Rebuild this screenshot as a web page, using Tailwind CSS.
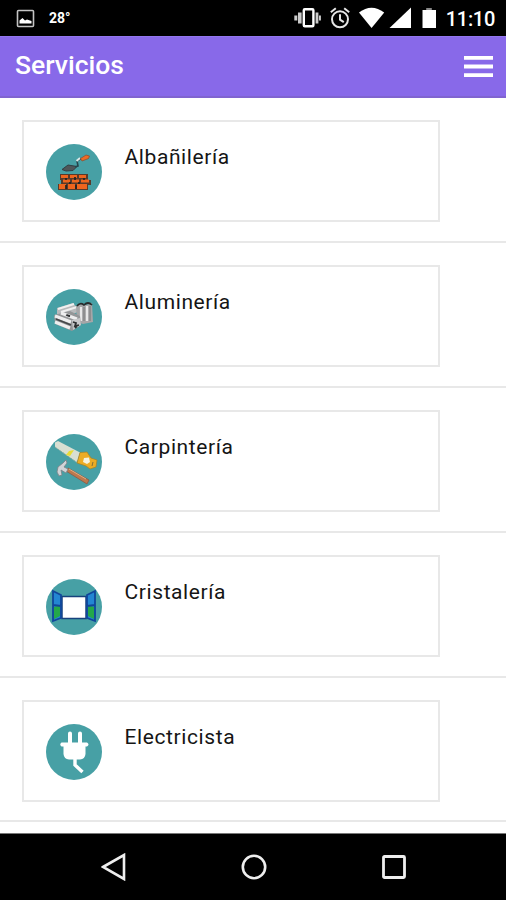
<!DOCTYPE html>
<html lang="es">
<head>
<meta charset="utf-8">
<title>Servicios</title>
<script src="https://cdn.jsdelivr.net/npm/@tailwindcss/browser@4"></script>
</head>
<body class="bg-white">
<div class="w-[506px] h-[900px] overflow-hidden flex flex-col bg-white font-[Roboto,'Liberation_Sans',sans-serif]">
  <div class="h-9 shrink-0 bg-black flex items-center justify-between pl-4 pr-[11px] text-white">
    <div class="flex items-center gap-[14px]">
      <svg width="19" height="19" viewBox="0 0 19 19"><rect x="1.5" y="1.5" width="16" height="16" rx="1" fill="none" stroke="#c4c4c4" stroke-width="1.6"/><path d="M3.5 14.5V11.5L6.5 9L9 11.5L11 10.5L15.5 12V14.5Z" fill="#fff"/></svg>
      <span class="text-sm font-bold leading-none">28°</span>
    </div>
    <svg width="142" height="22" viewBox="294 7 142 22" class="ml-auto mr-[10px]" fill="#fff">
      <rect x="303.8" y="9.3" width="9.6" height="17" rx="1" fill="none" stroke="#fff" stroke-width="2.4"/>
      <path d="M298 12.5h3.6v11H298zM294.3 15.5h3v5h-3zM315.6 12.5h2.8v11h-2.8zM319 15.5h1.9v5H319z" fill="#ccc"/>
      <g fill="none" stroke="#e6e6e6" stroke-width="2"><circle cx="340" cy="19.3" r="8"/><path d="M340 14.3v5.3l3.8 2.6M330.8 12.3l5-4M349.2 12.3l-5-4"/></g>
      <path d="M359 12.5Q371.5 3 384.2 12.5L371.6 28Z"/>
      <path d="M389.5 28L411 7.5V28Z"/>
      <path d="M422.5 10h13.5v18h-13.5z"/><path d="M426.2 8h5.6v2h-5.6z" fill="#888"/>
    </svg>
    <span class="text-[20px] font-medium leading-none tracking-[-0.3px] pt-px">11:10</span>
  </div>
  <header class="h-[62px] shrink-0 bg-[#8869e9] border-t border-t-[#9376ef] border-b-2 border-b-[#8064d0] flex items-center justify-between pl-[15px] pr-[13px]">
    <h1 class="text-[26.5px] leading-none font-medium text-white pb-[2px]">Servicios</h1>
    <svg width="29" height="22" viewBox="0 0 29 22" fill="#fff"><path d="M0 0h29v3.8H0zM0 8.6h29v3.8H0zM0 17.2h29V21H0z"/></svg>
  </header>
  <main class="h-[735px] shrink-0 overflow-hidden text-[21px] text-[#151515] tracking-[0.6px]">
    <section class="h-[144.9px] pt-[22px] pl-[22px] border-b-2 border-[#e8e8e8]">
      <div class="w-[418px] h-[102px] border-2 border-[#e8e8e8] flex pl-[21.5px] pt-[22px] gap-[23px]">
        <svg width="56" height="56" viewBox="0 0 56 56"><circle cx="28" cy="28" r="28" fill="#47a0a5"/>
          <path d="M16 25.5L22 21L31 22.5L27 26.5L20 27Z" fill="#4e5659" stroke="#333e42"/><path d="M29 23L32 22L31 17L35 14.5" fill="none" stroke="#26454c" stroke-width="1.6"/><path d="M30.5 17L34 14" stroke="#dce8e7" stroke-width="2"/><path d="M34.5 14.5L40 11L43.5 12L42.5 14.5L36 17Z" fill="#ed6b24" stroke="#8c4b2b" stroke-width=".7"/>
          <path d="M14 30h28v6h3v5h-3v5H12v-6h3v-4h-1z" fill="#583b2b"/><g fill="#ee651e"><path d="M15 31h7v3h-7zM24 31h7v3h-7zM33 31h7v3h-7zM17 35.5h7v3h-7zM26 35.5h7v3h-7zM35 35.5h8v3h-8zM13 40h7v5h-7zM22 40h7v5h-7zM31 40h10v5H31z"/></g><path d="M20 34v2M29 33v3M38 34v2M24 38v2M33 38v2M20 41v4M30 41v4" stroke="#222" stroke-width="1.7"/></svg>
        <span class="leading-7 -mt-px">Albañilería</span>
      </div>
    </section>
    <section class="h-[144.9px] pt-[22px] pl-[22px] border-b-2 border-[#e8e8e8]">
      <div class="w-[418px] h-[102px] border-2 border-[#e8e8e8] flex pl-[21.5px] pt-[22px] gap-[23px]">
        <svg width="56" height="56" viewBox="0 0 56 56"><circle cx="28" cy="28" r="28" fill="#47a0a5"/>
          <path d="M11 19L27 14L34 22L20 28L11 25Z" fill="#b8babc"/><path d="M12 20L28 15M15 23L31 18" stroke="#f0f0f0" stroke-width="2"/>
          <path d="M30 17L36 14L40 16L46 14L47 33L37 35L31 33Z" fill="#a6a6a8"/><path d="M31 17Q34 13 38 16Q42 12 46 16" fill="none" stroke="#272b2c" stroke-width="1.7"/><path d="M35 18v14M41 17v15" stroke="#e8e8e8" stroke-width="2.2"/><path d="M38 18v14M44 17v15" stroke="#777" stroke-width="1"/>
          <path d="M8 26L24 22L34 27L35 36L26 42L9 35Z" fill="#949698"/><path d="M9 27L25 33M9 33L24 39M15 24L31 30" stroke="#eeeeef" stroke-width="3"/><path d="M10 30L25 36M20 26l4 1.5" stroke="#454749" stroke-width="1.4"/><path d="M26 31l8-2 1 7-8 5z" fill="#c7c8ca"/><path d="M27 33l3 1-1 3 4-1M29 39l2-2M21 26l3 1" stroke="#2d2f30" stroke-width="1.8" fill="none"/></svg>
        <span class="leading-7 -mt-px">Aluminería</span>
      </div>
    </section>
    <section class="h-[144.9px] pt-[22px] pl-[22px] border-b-2 border-[#e8e8e8]">
      <div class="w-[418px] h-[102px] border-2 border-[#e8e8e8] flex pl-[21.5px] pt-[22px] gap-[23px]">
        <svg width="56" height="56" viewBox="0 0 56 56"><circle cx="28" cy="28" r="28" fill="#47a0a5"/>
          <path d="M9 8.5L12 7L34 18.5L31 28.5L9 13Z" fill="#d8dfd2"/><path d="M9 13L31 28.5" stroke="#87aa9d" stroke-dasharray="2 1.2"/><path d="M23 17L28 16L24 22L20 21Z" fill="#e8dc35"/>
          <path d="M34 18.5L41 18L45 24L51 26L50 33L44 35L40 32L31 29Z" fill="#edac24" stroke="#a38227" stroke-width=".7"/><path d="M38 24L43 23.5L44 28L41 30L37 28Z" fill="#f6f3df"/><path d="M47 28L46 32" stroke="#846d34"/>
          <path d="M22 34L43 46L41 50L20 37Z" fill="#bd784d" stroke="#8a5540" stroke-width=".7"/><path d="M23 35L40 45" stroke="#e0ae80"/><path d="M20 26L21 29L18 33L22 35L20 39L15 36L16 41L13 42L11 38L12 33L17 29Z" fill="#d0d4d7" stroke="#7d8287" stroke-width=".8"/></svg>
        <span class="leading-7 -mt-px">Carpintería</span>
      </div>
    </section>
    <section class="h-[144.9px] pt-[22px] pl-[22px] border-b-2 border-[#e8e8e8]">
      <div class="w-[418px] h-[102px] border-2 border-[#e8e8e8] flex pl-[21.5px] pt-[22px] gap-[23px]">
        <svg width="56" height="56" viewBox="0 0 56 56"><circle cx="28" cy="28" r="28" fill="#47a0a5"/>
          <path d="M16 17.5h24v22H16z" fill="#fff" stroke="#17427d" stroke-width="1.5"/>
          <path d="M7 12L15 16V39L7 42ZM49 12L41 16V39L49 42Z" fill="#2386d2"/><path d="M8 28L14 26V37L8 40ZM48 28L42 26V37L48 40Z" fill="#24a84a"/><path d="M7 12L15 16V39L7 42ZM49 12L41 16V39L49 42ZM7 26L15 27M49 26L41 27" fill="none" stroke="#10469b" stroke-width="1.8"/></svg>
        <span class="leading-7 -mt-px">Cristalería</span>
      </div>
    </section>
    <section class="h-[144.9px] pt-[22px] pl-[22px] border-b-2 border-[#e8e8e8]">
      <div class="w-[418px] h-[102px] border-2 border-[#e8e8e8] flex pl-[21.5px] pt-[22px] gap-[23px]">
        <svg width="56" height="56" viewBox="0 0 56 56"><circle cx="28" cy="28" r="28" fill="#47a0a5"/>
          <path d="M24 9.5V20M34 9.5V20" stroke="#fff" stroke-width="4" stroke-linecap="round"/><path d="M15.5 18.5H41Q44 20.5 41 22.5H39.5V30Q39 35 34 35.5H23Q18 35 17.5 30V22.5H15.5Q13 20.5 15.5 18.5Z" fill="#fff"/><path d="M29 34V41L36.5 48" fill="none" stroke="#fff" stroke-width="3.4"/></svg>
        <span class="leading-7 -mt-px">Electricista</span>
      </div>
    </section>
  </main>
  <nav class="grow bg-black border-t border-[#777] flex items-center justify-between pl-[101px] pr-[99px]">
    <svg width="26" height="28" viewBox="0 0 26 28" fill="none" stroke="#eee" stroke-width="2.6"><path d="M2 14L23 2V26Z"/></svg>
    <svg width="26" height="26" viewBox="0 0 26 26" fill="none" stroke="#eee" stroke-width="2.6"><circle cx="13" cy="13" r="11.2"/></svg>
    <svg width="26" height="26" viewBox="0 0 26 26" fill="none" stroke="#eee" stroke-width="2.8"><rect x="2.5" y="2.5" width="21" height="21" rx="1"/></svg>
  </nav>
</div>
</body>
</html>
